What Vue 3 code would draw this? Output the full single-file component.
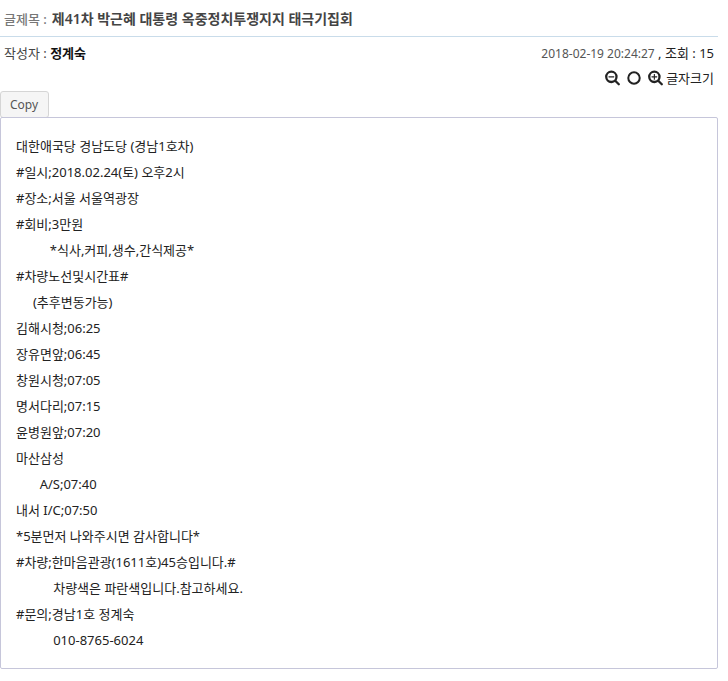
<script setup>
import { ref } from 'vue'

const size = ref(13)
const lines = [
  [0, '대한애국당 경남도당 (경남1호차)'],
  [0, '#일시;2018.02.24(토) 오후2시'],
  [0, '#장소;서울 서울역광장'],
  [0, '#회비;3만원'],
  [10, '*식사,커피,생수,간식제공*'],
  [0, '#차량노선및시간표#'],
  [5, '(추후변동가능)'],
  [0, '김해시청;06:25'],
  [0, '장유면앞;06:45'],
  [0, '창원시청;07:05'],
  [0, '명서다리;07:15'],
  [0, '윤병원앞;07:20'],
  [0, '마산삼성'],
  [7, 'A/S;07:40'],
  [0, '내서 I/C;07:50'],
  [0, '*5분먼저 나와주시면 감사합니다*'],
  [0, '#차량;한마음관광(1611호)45승입니다.#'],
  [11, '차량색은 파란색입니다.참고하세요.'],
  [0, '#문의;경남1호 정계숙'],
  [11, '010-8765-6024'],
]
const body = lines.map(([indent, text]) => '\u00a0'.repeat(indent) + text)

function copy() {
  navigator.clipboard?.writeText(body.join('\n'))
}
</script>

<template>
  <main class="post">
    <header class="title-row">
      <span class="title-label">글제목 :</span>
      <h1 class="title">제41차 박근혜 대통령 옥중정치투쟁지지 태극기집회</h1>
    </header>
    <div class="meta">
      <div class="author">작성자 : <strong>정계숙</strong></div>
      <div class="stats"><time>2018-02-19 20:24:27</time> , 조회 : 15</div>
    </div>
    <div class="tools">
      <button type="button" class="icon" aria-label="작게" @click="size = Math.max(9, size - 1)">
        <svg width="15" height="16" viewBox="0 0 1664 1792" aria-hidden="true">
          <path d="M1024 736v64q0 13-9.5 22.500t-22.500 9.500h-576q-13 0-22.500-9.500t-9.500-22.500v-64q0-13 9.500-22.500t22.500-9.500h576q13 0 22.500 9.500t9.500 22.500z" />
          <path fill-rule="evenodd" d="M1152 768a448 448 0 1 0-896 0 448 448 0 1 0 896 0zM1664 1600q0 53-37.500 90.500t-90.500 37.500q-54 0-90-38l-343-342q-179 124-399 124a704 704 0 1 1 704-704q0 220-124 399l343 343q37 37 37 90z" />
        </svg>
      </button>
      <button type="button" class="icon" aria-label="기본" @click="size = 13">
        <svg width="14" height="16" viewBox="0 0 1536 1792" aria-hidden="true">
          <circle cx="768" cy="896" r="640" fill="none" stroke="currentColor" stroke-width="224" />
        </svg>
      </button>
      <button type="button" class="icon" aria-label="크게" @click="size = Math.min(24, size + 1)">
        <svg width="15" height="16" viewBox="0 0 1664 1792" aria-hidden="true">
          <path d="M1024 736v64q0 13-9.500 22.500t-22.500 9.500h-224v224q0 13-9.500 22.500t-22.500 9.500h-64q-13 0-22.500-9.500t-9.500-22.500v-224h-224q-13 0-22.500-9.500t-9.500-22.500v-64q0-13 9.500-22.500t22.500-9.500h224v-224q0-13 9.500-22.500t22.500-9.500h64q13 0 22.500 9.500t9.500 22.500v224h224q13 0 22.500 9.500t9.500 22.500z" />
          <path fill-rule="evenodd" d="M1152 768a448 448 0 1 0-896 0 448 448 0 1 0 896 0zM1664 1600q0 53-37.500 90.500t-90.500 37.500q-54 0-90-38l-343-342q-179 124-399 124a704 704 0 1 1 704-704q0 220-124 399l343 343q37 37 37 90z" />
        </svg>
      </button>
      <span>글자크기</span>
    </div>
    <button type="button" class="copy" @click="copy">Copy</button>
    <article class="body" :style="{ fontSize: size + 'px' }">
      <p v-for="(line, i) in body" :key="i">{{ line }}</p>
    </article>
  </main>
</template>

<style>
body {
  margin: 0;
  background: #fff;
}
</style>

<style scoped>
.post {
  margin-right: 10px;
  font-family: "Noto Sans", "Noto Sans CJK KR", sans-serif;
  font-size: 13px;
  line-height: 24px;
  color: #222;
}
.title-row {
  display: flex;
  gap: 5px;
  align-items: center;
  height: 34px;
  padding: 2px 4px 0;
  border-bottom: 1px solid #c9dcea;
}
.title-label {
  font-weight: 500;
  color: #777;
}
.title {
  margin: 0;
  font-size: 14px;
  font-weight: 600;
  color: #444;
}
.meta {
  display: flex;
  justify-content: space-between;
  padding: 4px 4px 0;
}
.author {
  color: #444;
}
.author strong {
  font-weight: 600;
  color: #111;
}
time {
  font-size: 12px;
  color: #555;
}
.tools {
  display: flex;
  justify-content: flex-end;
  align-items: center;
  gap: 7px;
  padding-right: 4px;
}
.tools span {
  margin-left: -4px;
}
.icon {
  display: flex;
  padding: 0;
  border: 0;
  background: none;
  color: #222;
  cursor: pointer;
}
.icon svg {
  display: block;
  fill: currentColor;
}
.copy {
  display: block;
  height: 27px;
  margin-top: 1px;
  padding: 0 10px 0 9px;
  border: 1px solid #d5d5d5;
  border-radius: 3px;
  background: #f5f5f5;
  font-family: inherit;
  font-size: 12px;
  color: #555;
  cursor: pointer;
}
.body {
  margin-top: -1px;
  padding: 15px;
  border: 1px solid #c6c6da;
  border-radius: 2px;
  line-height: 26px;
}
.body p {
  margin: 0;
  white-space: pre-wrap;
}
</style>
